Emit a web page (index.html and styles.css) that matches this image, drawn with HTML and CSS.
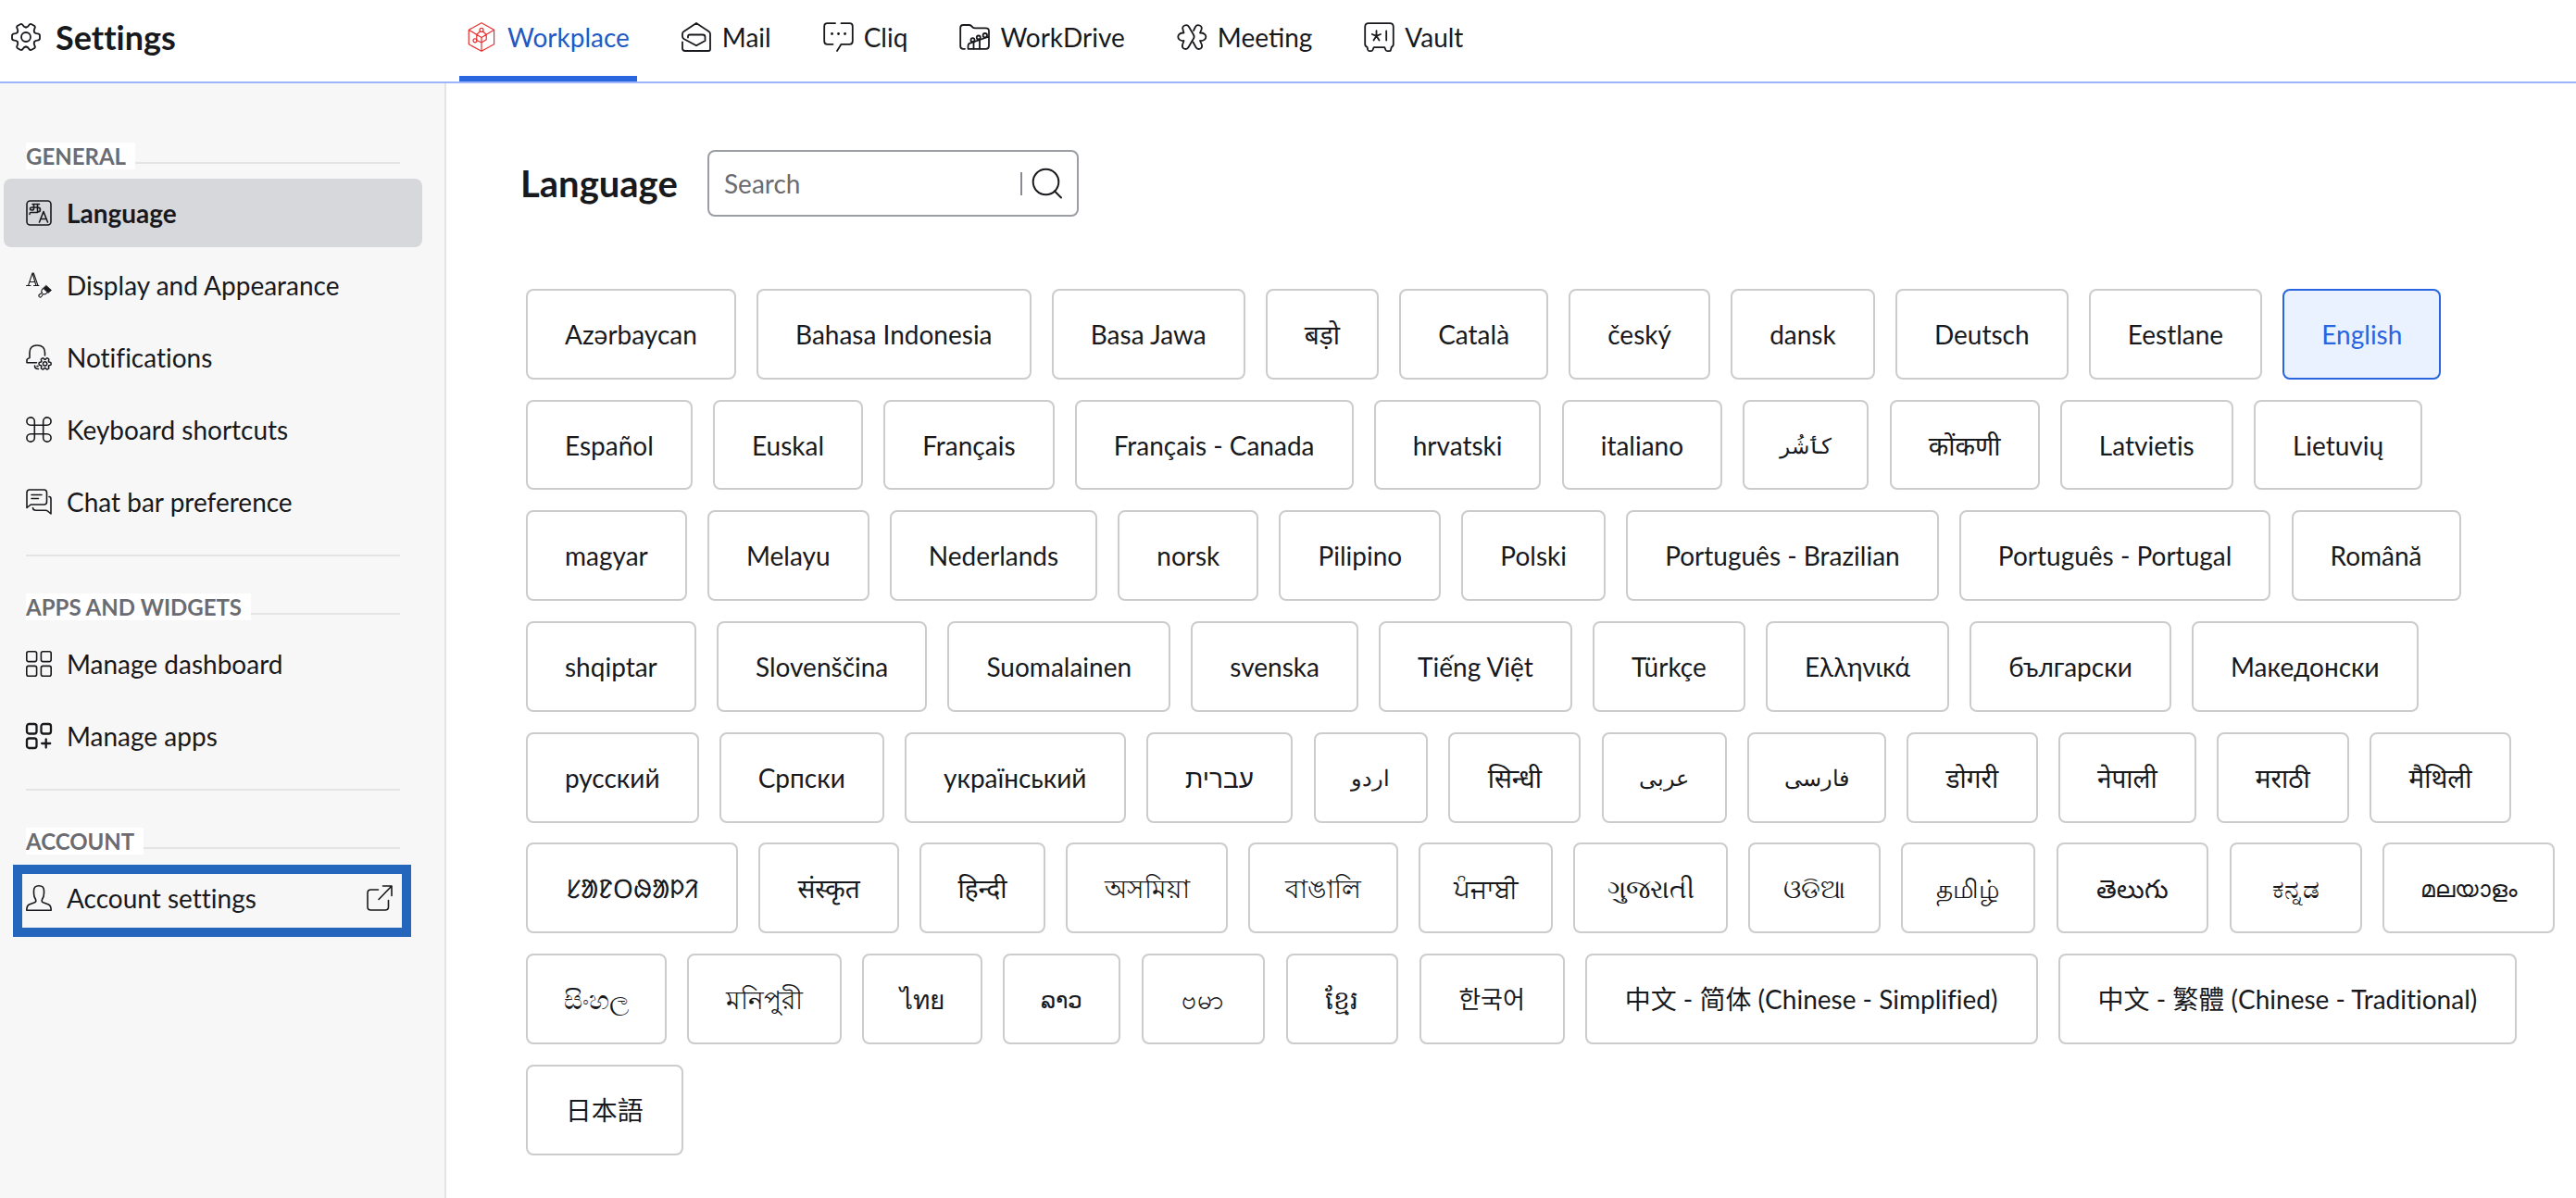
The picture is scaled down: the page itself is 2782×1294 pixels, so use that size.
FILE: index.html
```html
<!DOCTYPE html>
<html lang="en">

<head>
  <meta charset="utf-8">
  <title>Settings</title>
  <meta name="viewport" content="width=device-width, initial-scale=1.0">
  <link rel="stylesheet" href="styles.css">
</head>

<body>
  <header class="header">
    <div class="header-title">
      <svg class="icon-lg" viewBox="-16 -16 32 32">
        <defs>
          <path id="tooth" d="M9.1-5.25Q10.05-3.6 12.4-3.6Q15-3.6 15-1.6V1.6Q15 3.6 12.4 3.6Q10.05 3.6 9.1 5.25" />
          <g id="gear">
            <use href="#tooth" />
            <use href="#tooth" transform="rotate(60)" />
            <use href="#tooth" transform="rotate(120)" />
            <use href="#tooth" transform="rotate(180)" />
            <use href="#tooth" transform="rotate(240)" />
            <use href="#tooth" transform="rotate(300)" />
            <circle r="5" />
          </g>
        </defs>
        <use href="#gear" />
      </svg>
      <h1>Settings</h1>
    </div>

    <nav class="tabs">
      <a class="tab active">
        <svg class="icon-lg cube" viewBox="0 0 32 32">
          <path d="M16 .8L29.6 8.3V23.8L16 31.3L2.3 23.8V8.3ZM2.3 8.3L16 16.5L29.6 8.3M16 16.5V31M10.8 13.2L14.5 10M21.2 13.2L17.5 10M10.8 13.2V18.5M21.2 13.2V18.8L16 22M10.8 19.5L16 22" />
          <circle cx="16" cy="8.4" r="2" />
          <circle cx="9" cy="19.8" r="2" />
        </svg>
        <span>Workplace</span>
      </a>
      <a class="tab">
        <svg class="icon-lg" viewBox="0 0 32 32">
          <path d="M7 16.5V15.5Q7 13.5 9 13.5H23Q25.5 13.5 25.5 16V20L16 25.3L2.5 18Q1 17 1 15.3V12.5Q1 11 2.5 10L16 1L29.5 10Q31 11 31 12.5V29Q31 31 29 31H4Q1 31 1 28V21.5" />
        </svg>
        <span>Mail</span>
      </a>
      <a class="tab">
        <svg class="icon-lg" viewBox="0 0 32 32">
          <path d="M13 1.2H4.5Q1.2 1.2 1.2 4.5V20.5Q1.2 23.8 4.5 23.8H10.5M19.5 1.2H28.5Q31.8 1.2 31.8 4.5V20.5Q31.8 23.8 28.5 23.8H19.5L15 31" />
          <path class="dots" d="M9.5 12.5h.1M16.5 12.5h.1M23.5 12.5h.1" />
        </svg>
        <span>Cliq</span>
      </a>
      <a class="tab">
        <svg class="icon-lg" viewBox="0 0 32 32">
          <path d="M6 28.8H4.2Q1.2 28.8 1.2 25.8V6Q1.2 3 4.2 3H10.5Q12 3 13 4L14.5 5.5Q15.5 6.3 17 6.3H28.5Q32 6.3 32 9.5V25.5Q32 28.8 28.8 28.8H9.5V25.5Q9.5 24 11 22.8L32 15.5" />
          <path d="M15.5 21.5V28.5M22 19V28.5" />
          <circle cx="14.5" cy="19.2" r="2" />
          <circle cx="20.8" cy="16.5" r="2" />
          <circle cx="27.8" cy="14.2" r="2.2" />
        </svg>
        <span>WorkDrive</span>
      </a>
      <a class="tab">
        <svg class="icon-lg" viewBox="0 0 32 32">
          <path d="M16.500 11L13 5C11 1.500 5 3.500 6.500 8L7.500 11.500C-.8 11-.8 20.600 7.500 20L6 24.500C5 29 10.500 30.500 12.500 27L17.500 18.500Q19.500 16 18 13.500L16.500 11" />
          <path d="M18 9L20 5C22 1.500 28 3.500 26.500 8L25 11.500C33.500 11 33.500 20.600 25 20L27 24.500C28 29 22.500 30.500 20.500 27L17.500 21.500" />
        </svg>
        <span>Meeting</span>
      </a>
      <a class="tab">
        <svg class="icon-lg" viewBox="0 0 32 32">
          <path d="M5 1.200H28Q31.800 1.200 31.800 5V23.500Q31.800 26.200 29.800 26.800L29 30Q28.700 31.200 27.500 31.200H25.500Q24 31.200 23.500 30L22.300 27.200H10.700L9.500 30Q9 31.200 7.800 31.200H6Q4.800 31.200 4.300 30L3.500 26.800Q1.200 26.200 1.200 23.500V5Q1.200 1.200 5 1.200Z" />
          <path d="M13.500 9.200V14.800M8.800 13L13.500 14.800L18 13M10.500 19.500L13.500 14.800L16.500 19.500M24.200 9.500V19.500" />
        </svg>
        <span>Vault</span>
      </a>
    </nav>
  </header>

  <div class="layout">
    <aside class="sidebar">
      <section class="menu">
        <h2><span>GENERAL</span></h2>
        <a class="menu-item selected">
          <svg class="icon" viewBox="0 0 28 28">
            <rect x="1" y="1" width="26" height="26" rx="3.500" />
            <path d="M7 4.500H14.500M8.500 4.500V9.500Q8.500 11 6.500 11Q4.500 11 4.500 9.300Q4.500 8 7 8H12.500Q15.500 8 15.500 10.500Q15.500 13 12.500 13M12.500 4.500V13.500H5Q4 13.500 4 15.500" />
            <path d="M14.500 24L19 12.500L23.500 24M16 20.500H22" />
          </svg>
          <span>Language</span>
        </a>
        <a class="menu-item">
          <svg class="icon" viewBox="0 0 28 28">
            <path class="thin" d="M.5 14.500H5M8.500 14.500H14M2.500 14.500L7 1L11 14.500M7 1H8.300L13 14.500M4 10.500H9.500" />
            <path class="thin" d="M18.500 17.800L17.500 18.500Q16 20.500 17.500 22.500L15 23.800Q13.200 25 14.200 26.500Q15.500 28 17 26L18.500 23.500Q21 24.500 22.500 22.500L23 21.800" />
            <path class="solid" d="M22 14.500L27.500 19.500L24 22.500L18.800 17.500Z" />
          </svg>
          <span>Display and Appearance</span>
        </a>
        <a class="menu-item">
          <svg class="icon" viewBox="0 0 28 28">
            <path d="M11.500 19.800H1V17Q1 15.500 4 14.500V9Q4 1 12 1Q20.500 1 20.500 9V12M9.500 23Q9.500 26.500 13.500 26.500M12 23.500H13" />
            <svg x="13.200" y="13.500" width="14.800" height="14.800" viewBox="-17 -17 34 34">
              <use class="mini-gear" href="#gear" />
            </svg>
          </svg>
          <span>Notifications</span>
        </a>
        <a class="menu-item">
          <svg class="icon" viewBox="0 0 28 28">
            <path d="M9.300 9.300H5A4.200 4.200 0 1 1 9.300 5V23A4.200 4.200 0 1 1 5 18.700H23A4.200 4.200 0 1 1 18.700 23V5A4.200 4.200 0 1 1 23 9.300Z" />
          </svg>
          <span>Keyboard shortcuts</span>
        </a>
        <a class="menu-item">
          <svg class="icon" viewBox="0 0 28 28">
            <path d="M1 20.500V4Q1 1 4 1H19.500Q22.500 1 22.500 4V14Q22.500 17 19.500 17H6Q5 17 4 18ZM6 6.500H17M6 10.500H13.500" />
            <path d="M25 8.500Q27 8.500 27 11V27L23.500 24Q22.500 23.200 21.500 23.200H11Q7.500 23.200 7.500 20.500" />
          </svg>
          <span>Chat bar preference</span>
        </a>
      </section>

      <section class="menu">
        <h2><span>APPS AND WIDGETS</span></h2>
        <a class="menu-item">
          <svg class="icon" viewBox="0 0 28 28">
            <rect x=".8" y=".8" width="10.800" height="10.800" rx="2" />
            <rect x="16.400" y=".8" width="10.800" height="10.800" rx="2" />
            <rect x=".8" y="16.400" width="10.800" height="10.800" rx="2" />
            <rect x="16.400" y="16.400" width="10.800" height="10.800" rx="2" />
          </svg>
          <span>Manage dashboard</span>
        </a>
        <a class="menu-item">
          <svg class="icon bold" viewBox="0 0 28 28">
            <rect x="1" y="1" width="10.500" height="10.500" rx="2.500" />
            <rect x="16.500" y="1" width="10.500" height="10.500" rx="2.500" />
            <rect x="1" y="16.500" width="10.500" height="10.500" rx="2.500" />
            <path d="M21.700 17.500V26.500M17.200 22H26.200" />
          </svg>
          <span>Manage apps</span>
        </a>
      </section>

      <section class="menu">
        <h2><span>ACCOUNT</span></h2>
        <a class="menu-item highlighted">
          <svg class="icon" viewBox="0 0 28 28">
            <path d="M.8 27.200Q.8 22.500 3.500 21L9.500 18.800Q11.500 18 10.500 15.500Q8.500 12.500 8.500 9V6Q8.500 .8 14 .8Q19.500 .8 19.500 6V9Q19.500 12.500 17.500 15.500Q16.500 18 18.500 18.800L24.500 21Q27.200 22.500 27.200 27.200Z" />
          </svg>
          <span>Account settings</span>
          <svg class="icon external" viewBox="0 0 28 28">
            <path d="M12.500 5H4.500Q1 5 1 8.500V23.500Q1 27 4.500 27H20Q23.500 27 23.500 23.500V16.500M17.500 1H27V11.500M27 1L13 15.500" />
          </svg>
        </a>
      </section>
    </aside>

    <main class="content">
      <div class="content-top">
        <h2>Language</h2>
        <div class="search">
          <input type="text" placeholder="Search">
          <svg class="search-icon" viewBox="0 0 34 34">
            <circle cx="15.500" cy="15.500" r="13.800" />
            <path d="M25 25.500L32 32.500" />
          </svg>
        </div>
      </div>

      <div class="languages">
        <button class="az">Azərbaycan</button>
        <button class="id">Bahasa Indonesia</button>
        <button class="jv">Basa Jawa</button>
        <button class="brx">बड़ो</button>
        <button class="ca">Català</button>
        <button class="cs">český</button>
        <button class="da">dansk</button>
        <button class="de">Deutsch</button>
        <button class="et">Eestlane</button>
        <button class="en current">English</button>
        <button class="es">Español</button>
        <button class="eu">Euskal</button>
        <button class="fr">Français</button>
        <button class="fr-ca">Français - Canada</button>
        <button class="hr">hrvatski</button>
        <button class="it">italiano</button>
        <button class="ks">کٲشُر</button>
        <button class="kok">कोंकणी</button>
        <button class="lv">Latvietis</button>
        <button class="lt">Lietuvių</button>
        <button class="hu">magyar</button>
        <button class="ms">Melayu</button>
        <button class="nl">Nederlands</button>
        <button class="no">norsk</button>
        <button class="fil">Pilipino</button>
        <button class="pl">Polski</button>
        <button class="pt-br">Português - Brazilian</button>
        <button class="pt">Português - Portugal</button>
        <button class="ro">Română</button>
        <button class="sq">shqiptar</button>
        <button class="sl">Slovenščina</button>
        <button class="fi">Suomalainen</button>
        <button class="sv">svenska</button>
        <button class="vi">Tiếng Việt</button>
        <button class="tr">Türkçe</button>
        <button class="el">Ελληνικά</button>
        <button class="bg">български</button>
        <button class="mk">Македонски</button>
        <button class="ru">русский</button>
        <button class="sr">Српски</button>
        <button class="uk">український</button>
        <button class="he">עברית</button>
        <button class="ur">اردو</button>
        <button class="sd">सिन्धी</button>
        <button class="ar">عربى</button>
        <button class="fa">فارسی</button>
        <button class="doi">डोगरी</button>
        <button class="ne">नेपाली</button>
        <button class="mr">मराठी</button>
        <button class="mai">मैथिली</button>
        <button class="sat">ᱥᱟᱱᱛᱷᱟᱞᱤ</button>
        <button class="sa">संस्कृत</button>
        <button class="hi">हिन्दी</button>
        <button class="as">অসমিয়া</button>
        <button class="bn">বাঙালি</button>
        <button class="pa">ਪੰਜਾਬੀ</button>
        <button class="gu">ગુજરાતી</button>
        <button class="or">ଓଡିଆ</button>
        <button class="ta">தமிழ்</button>
        <button class="te">తెలుగు</button>
        <button class="kn">ಕನ್ನಡ</button>
        <button class="ml">മലയാളം</button>
        <button class="si">සිංහල</button>
        <button class="mni">মনিপুরী</button>
        <button class="th">ไทย</button>
        <button class="lo">ລາວ</button>
        <button class="my">ဗမာ</button>
        <button class="km">ខ្មែរ</button>
        <button class="ko">한국어</button>
        <button class="zh-cn">中文 - 简体 (Chinese - Simplified)</button>
        <button class="zh-tw">中文 - 繁體 (Chinese - Traditional)</button>
        <button class="ja">日本語</button>
      </div>
    </main>
  </div>
</body>

</html>
```

FILE: styles.css
```css
* {
  box-sizing: border-box;
}

body {
  margin: 0;
  height: 1294px;
  display: flex;
  flex-direction: column;
  overflow: hidden;
  background-color: #ffffff;
  color: #18191c;
  font-family: Lato, "Noto Sans", "Noto Sans CJK SC", sans-serif;
  font-size: 28px;
  line-height: 36px;
  font-variant-ligatures: no-common-ligatures;
}

h1,
h2 {
  margin: 0;
}

svg {
  flex: none;
  fill: none;
  stroke: currentColor;
  stroke-width: 1.8;
  stroke-linecap: round;
  stroke-linejoin: round;
  overflow: visible;
}

.icon-lg {
  width: 32px;
  height: 32px;
}

.icon {
  width: 28px;
  height: 28px;
  stroke-width: 1.6;
}

.icon.bold {
  stroke-width: 2.3;
}

.thin {
  stroke-width: 1.1;
}

.solid {
  fill: currentColor;
  stroke-width: .8;
}

.dots {
  stroke-width: 2.8;
}

.mini-gear {
  stroke-width: 3.4;
}

/* top bar */
.header {
  display: flex;
  flex: none;
  height: 90px;
  border-bottom: 2px solid #9ab5fa;
}

.header-title {
  display: flex;
  align-items: center;
  gap: 16px;
  width: 496px;
  height: 80px;
  padding-left: 12px;
}

.header-title h1 {
  font-size: 36px;
  line-height: 44px;
}

.tabs {
  display: flex;
  gap: 40px;
  font-variant-ligatures: normal;
}

.tab {
  display: flex;
  align-items: center;
  gap: 12px;
  height: 88px;
  padding: 0 8px 2px;
  border-bottom: 6px solid transparent;
}

.tab.active {
  color: #2359c4;
  border-bottom-color: #2965de;
}

.cube {
  color: #e8312f;
  stroke-width: 1.2;
}

/* left menu */
.layout {
  display: flex;
  flex: 1;
}

.sidebar {
  flex: none;
  width: 482px;
  padding: 64px 24px 0 4px;
  background-color: #f7f7f7;
  border-right: 2px solid #e4e4e4;
}

.menu + .menu {
  margin-top: 20px;
}

.menu + .menu::before {
  content: "";
  display: block;
  height: 2px;
  margin: 0 24px 40px 24px;
  background-color: #e4e4e4;
}

.menu h2 {
  display: flex;
  height: 29px;
  margin: 0 24px 10px 24px;
  color: #6b6c72;
  font-size: 24px;
  line-height: 30px;
}

.menu h2 span {
  padding-right: 10px;
  background-color: #ffffff;
}

.menu h2::after {
  content: "";
  flex: 1;
  height: 2px;
  margin-top: 21px;
  background-color: #e4e4e4;
}

.menu-item {
  display: flex;
  align-items: center;
  gap: 16px;
  height: 74px;
  width: 452px;
  padding: 0 32px 0 24px;
  border-radius: 8px;
}

.menu-item + .menu-item {
  margin-top: 4px;
}

.menu-item.selected {
  background-color: #d7d8dc;
  font-weight: bold;
}

.menu-item.highlighted {
  width: 430px;
  height: 78px;
  margin: 11px 0 0 10px;
  padding: 0 10px 6px 4px;
  border: 10px solid #2466bc;
  border-radius: 0;
}

.external {
  margin-left: auto;
}

/* language picker */
.content {
  flex: 1;
  min-width: 0;
  padding: 72px 20px 0 80px;
}

.content-top {
  display: flex;
  align-items: center;
  gap: 32px;
  height: 72px;
}

.content-top h2 {
  width: 170px;
  font-size: 40px;
  line-height: 48px;
}

.search {
  display: flex;
  align-items: center;
  width: 401px;
  height: 72px;
  padding: 0 15px 0 16px;
  border: 2px solid #9b9ea3;
  border-radius: 8px;
}

.search input {
  flex: 1;
  min-width: 0;
  height: 25px;
  padding: 0;
  border: none;
  border-right: 2px solid #8a8b90;
  outline: none;
  font: inherit;
}

.search input::placeholder {
  color: #6b6c72;
  opacity: 1;
}

.search-icon {
  width: 34px;
  height: 34px;
  margin-left: 10px;
  stroke-width: 2;
}

.languages {
  display: flex;
  flex-wrap: wrap;
  gap: 21.9px 22.2px;
  margin: 78px 0 0 6px;
}

.languages button {
  height: 97.8px;
  padding: 0 40px;
  background-color: #ffffff;
  border: 2px solid #cccccc;
  border-radius: 8px;
  color: inherit;
  font: inherit;
  font-variant-ligatures: inherit;
  white-space: nowrap;
}

.languages .current {
  background-color: #eaf1ff;
  border-color: #2965de;
  color: #2965de;
}

.languages .brx,
.languages .ks,
.languages .kok,
.languages .he,
.languages .ur,
.languages .sd,
.languages .ar,
.languages .fa,
.languages .doi,
.languages .ne,
.languages .mr,
.languages .mai,
.languages .sat,
.languages .sa,
.languages .hi,
.languages .as,
.languages .bn,
.languages .pa,
.languages .gu,
.languages .or,
.languages .ta,
.languages .te,
.languages .kn,
.languages .ml,
.languages .si,
.languages .mni,
.languages .th,
.languages .lo,
.languages .my,
.languages .km,
.languages .ko,
.languages .ja,
.languages .zh-cn,
.languages .zh-tw {
  display: flex;
  align-items: center;
  justify-content: center;
  padding: 0;
}

.languages .brx { width: 122px; }
.languages .ks { width: 136.2px; font-size: 23px; }
.languages .kok { width: 162px; }
.languages .he { width: 158.8px; }
.languages .ur { width: 123.5px; font-size: 24px; }
.languages .sd { width: 143px; }
.languages .ar { width: 135.5px; font-size: 24px; }
.languages .fa { width: 149.5px; font-size: 24px; }
.languages .doi { width: 142px; }
.languages .ne { width: 148.5px; }
.languages .mr { width: 143px; }
.languages .mai { width: 153px; }
.languages .sat { width: 229px; }
.languages .sa { width: 151.7px; }
.languages .hi { width: 135.8px; }
.languages .as { width: 175px; }
.languages .bn { width: 161.8px; }
.languages .pa { width: 145px; }
.languages .gu { width: 166.7px; }
.languages .or { width: 143px; }
.languages .ta { width: 145px; }
.languages .te { width: 164.7px; }
.languages .kn { width: 143.7px; }
.languages .ml { width: 185.5px; font-size: 25px; }
.languages .si { width: 152px; }
.languages .mni { width: 166.8px; }
.languages .th { width: 130px; }
.languages .lo { width: 127px; font-size: 25px; }
.languages .my { width: 133.8px; }
.languages .km { width: 121.8px; }
.languages .ko { width: 157px; font-size: 26px; }
.languages .zh-cn { width: 488.8px; }
.languages .zh-tw { width: 495.5px; }
.languages .ja { width: 169.5px; }
```
